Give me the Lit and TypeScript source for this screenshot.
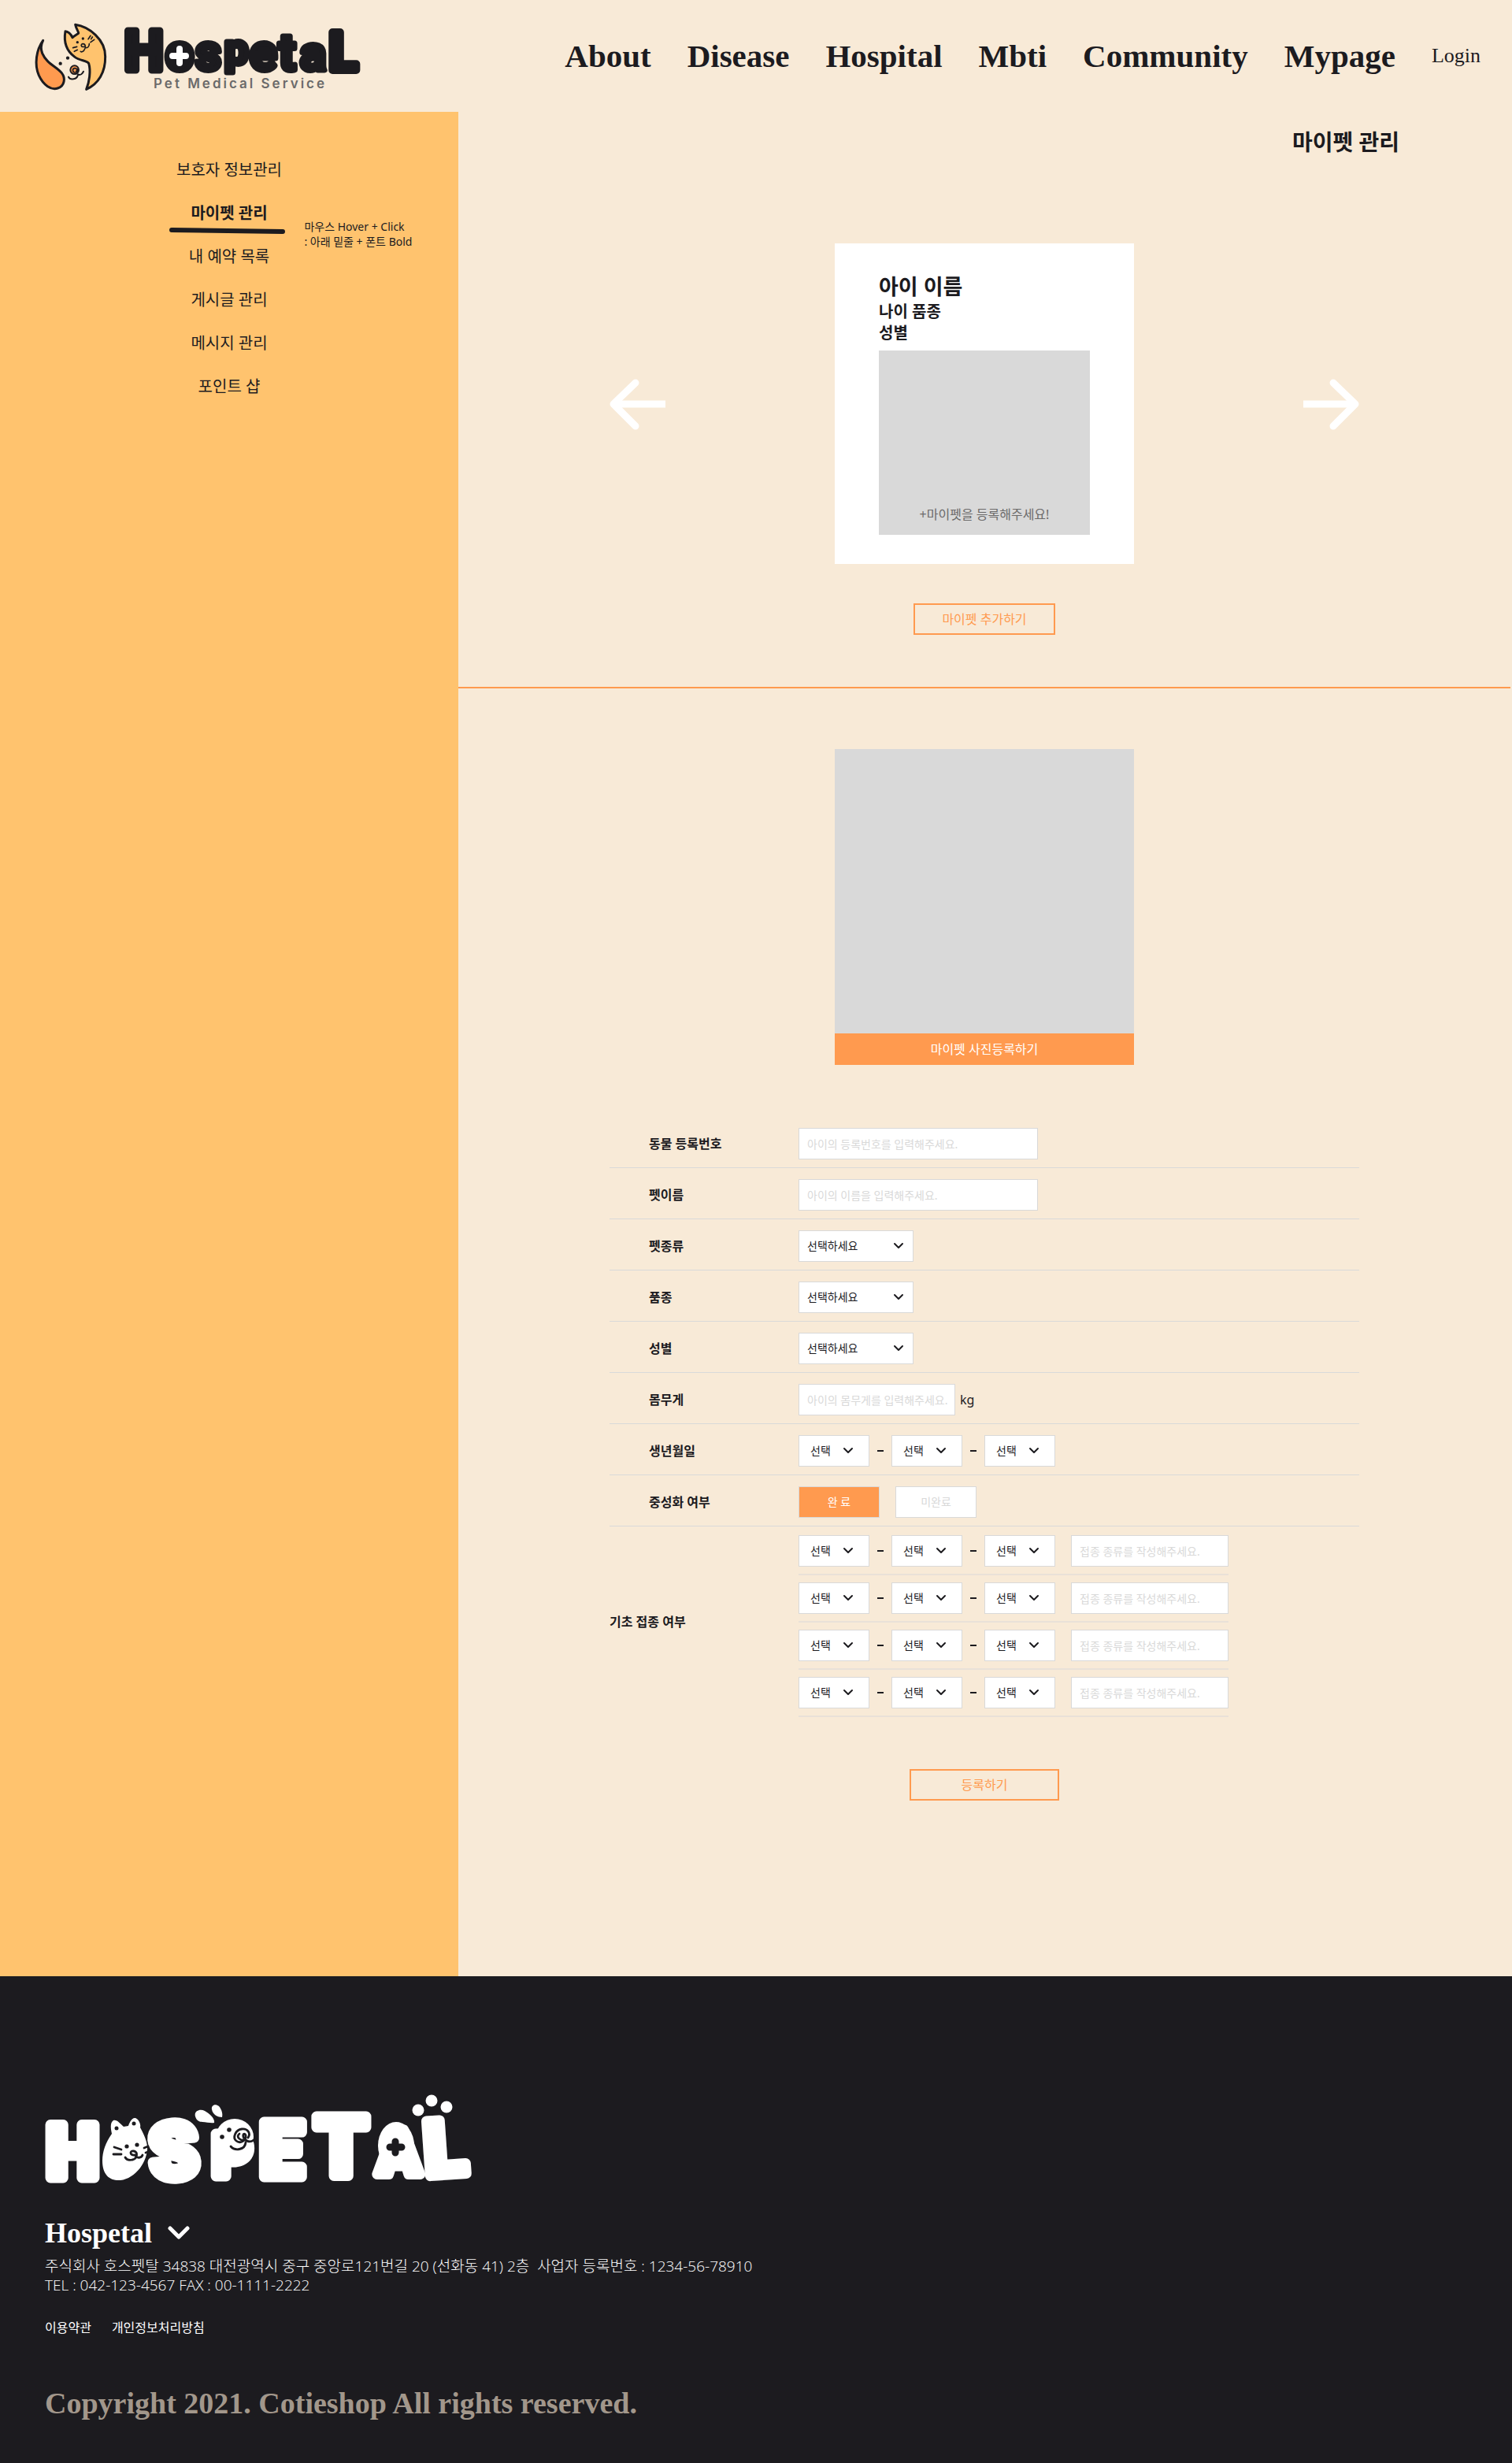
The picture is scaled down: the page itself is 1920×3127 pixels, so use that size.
import { LitElement, html, css, svg, nothing } from "lit";
import { customElement, state } from "lit/decorators.js";

const NAV = ["About", "Disease", "Hospital", "Mbti", "Community", "Mypage"];

const MENU = [
  "보호자 정보관리",
  "마이펫 관리",
  "내 예약 목록",
  "게시글 관리",
  "메시지 관리",
  "포인트 샵",
];

const DATE_PARTS = ["년", "월", "일"];

const chevron = html`
  <svg class="chevron" viewBox="0 0 14 10" aria-hidden="true">
    <path d="M2 2 L7 7 L12 2" fill="none" stroke="#1c1b1f" stroke-width="2" stroke-linecap="round" stroke-linejoin="round" />
  </svg>
`;

const headerLogo = html`
  <svg class="brand-logo" viewBox="40 11 420 120" role="img" aria-label="Hospetal Pet Medical Service">
    <g transform="translate(30 15) scale(0.3333)" stroke="#1c1b1f" stroke-linecap="round" stroke-linejoin="round" fill="none">
      <path fill="#ff9a4f" stroke-width="9" d="M74 109 C48 145 40 200 58 242 C76 281 105 299 130 291 C157 282 160 252 145 233 C125 208 88 198 71 158 C64 140 66 125 74 109Z" />
      <path fill="#ffc36e" stroke-width="9" d="M239 295 C250 268 257 225 248 196 C239 184 215 187 195 172 C165 150 152 115 159 74 C168 74 180 84 186 98 C192 92 200 88 209 82 C210 75 200 66 197 49 C250 57 311 105 311 170 C312 230 285 275 239 295Z" />
      <g fill="#1c1b1f" stroke="none">
        <circle cx="205" cy="116" r="5" />
        <circle cx="226" cy="102" r="5" />
        <circle cx="140" cy="197" r="6.5" />
        <circle cx="168" cy="176" r="6.5" />
      </g>
      <g stroke-width="5">
        <path d="M188 137 L203 133 M193 151 L205 145 M246 104 L255 91 M255 116 L269 106 M257 104 L262 96" />
        <path d="M230 133 C219 136 216 124 225 122 C236 121 238 136 231 145 C227 152 221 154 217 151 M236 136 C243 139 250 133 250 122" />
      </g>
      <circle cx="194" cy="221" r="16" fill="#ff9a4f" stroke-width="6" />
      <path stroke-width="5" d="M197 231 C186 232 184 217 194 215 C203 214 206 222 200 227 M206 218 C208 226 204 232 200 236" />
      <path stroke-width="6" d="M171 248 C178 261 203 259 207 240 M207 238 C216 243 225 236 228 227" />
    </g>
    <text
      x="158 210 248 285 317 354 381 418"
      y="89 89 89 81 89 89 89 89"
      font-family="Roboto, sans-serif"
      font-weight="700"
      font-size="64"
      fill="#1c1b1f"
      stroke="#1c1b1f"
      stroke-linejoin="round"
      stroke-width="7"
    ><tspan font-size="70" stroke-width="9">H</tspan>os<tspan font-size="54">p</tspan>et<tspan font-size="62">a</tspan><tspan font-size="66" stroke-width="10">L</tspan></text>
    <ellipse cx="228" cy="71" rx="14" ry="17" fill="#1c1b1f" />
    <path d="M228 62 V80 M219 71 H236" stroke="#ffffff" stroke-width="8" stroke-linecap="round" />
    <text x="195" y="112" font-family="Inter, sans-serif" font-size="17" font-weight="600" letter-spacing="3" fill="#6b6a6a">Pet Medical Service</text>
  </svg>
`;

const footerLogo = html`
  <svg class="footer-logo" viewBox="47 25 568 145" role="img" aria-label="HOSPETAL">
    <g fill="#ffffff" stroke="#ffffff" stroke-linejoin="round" stroke-width="13" font-family="Roboto, sans-serif" font-weight="900" font-size="98">
      <text x="59" y="145" font-size="94">H</text>
      <text x="140" y="135" font-size="54">O</text>
      <text x="193" y="148" rotate="-5">S</text>
      <text x="270" y="143" font-size="76">P</text>
      <text x="330" y="144">E</text>
      <text x="400" y="142" font-size="106">T</text>
      <text x="479" y="141" font-size="80">A</text>
      <text x="541" y="143" rotate="-4">L</text>
    </g>
    <g fill="#ffffff">
      <path d="M142 89 C134 100 130 112 130 123 C130 142 140 149 153 148 C172 146 188 124 187 105 C186 95 180 85 178 81 C179 78 177 71 172 69 C167 68 164 76 163 79 L157 80 C152 76 149 71 144 72 C139 75 141 84 142 89Z" />
      <path d="M248 67 C246 60 254 57 260 60 C267 64 273 70 272 75 C268 76 262 74 257 74 C252 74 249 71 248 67Z" />
      <path d="M269 58 C268 53 273 50 278 54 C282 59 283 64 282 68 C277 68 270 65 269 58Z" />
      <ellipse cx="298" cy="93" rx="24" ry="23" />
      <ellipse cx="503" cy="104" rx="23" ry="30" />
      <ellipse cx="531" cy="59" rx="7.5" ry="7.5" />
      <ellipse cx="548" cy="47" rx="7.5" ry="7.5" />
      <ellipse cx="567" cy="55" rx="7.5" ry="7.5" />
    </g>
    <g fill="#1c1b1f">
      <ellipse cx="148" cy="82" rx="2.5" ry="2.5" />
      <ellipse cx="170" cy="76" rx="2.5" ry="2.5" />
      <circle cx="161" cy="105" r="2.6" />
      <circle cx="174" cy="103" r="2.6" />
      <circle cx="282" cy="93" r="2.8" />
      <circle cx="291" cy="84" r="2.8" />
    </g>
    <g fill="none" stroke="#1c1b1f" stroke-width="2.8" stroke-linecap="round" stroke-linejoin="round">
      <path d="M145 106 L154 109 M144 115 L154 115 M183 107 L188 105 M185 113 L188 112" />
      <path d="M171 116 C165 117 164 110 170 111 C176 112 174 121 168 122 C163 123 160 121 159 119 M172 117 C175 121 180 119 181 116" />
      <path d="M311 97 C305 98 299 93 304 89 M315 94 C319 88 314 82 307 83 C299 84 295 94 300 98 C305 102 313 98 312 91 C311 88 308 89 309 93 C311 98 317 101 322 97" />
      <path d="M293 105 C298 111 311 110 312 100" />
    </g>
    <path d="M502 99 V113 M495 106 H510" stroke="#1c1b1f" stroke-width="9" stroke-linecap="round" />
  </svg>
`;

@customElement("app-root")
export class AppRoot extends LitElement {
  @state() private neutered = true;

  static styles = css`
    :host {
      display: block;
      background: #f8ead7;
      color: #1c1b1f;
      font-family: "Noto Sans", "Noto Sans CJK KR", sans-serif;
      font-size: 16px;
      line-height: 24px;
    }
    * {
      box-sizing: border-box;
    }
    a {
      color: inherit;
      text-decoration: none;
    }
    button,
    input,
    select {
      font: inherit;
      color: inherit;
      margin: 0;
      border-radius: 0;
    }
    button {
      cursor: pointer;
    }
    h1,
    h2,
    p,
    ul {
      margin: 0;
      padding: 0;
      list-style: none;
    }

    .header {
      display: flex;
      justify-content: space-between;
      align-items: center;
      min-height: 142px;
      padding: 0 40px;
    }
    .brand-logo {
      display: block;
      width: 420px;
      height: 120px;
      overflow: visible;
    }
    .nav {
      display: flex;
      align-items: center;
      gap: 46px;
      font-family: "Liberation Serif", serif;
      font-size: 41px;
      font-weight: 700;
      line-height: 48px;
    }
    .nav .login {
      font-size: 26px;
      font-weight: 400;
    }

    .body {
      display: grid;
      grid-template-columns: 582fr 1338fr;
    }
    .sidebar {
      background: #ffc36e;
      padding-top: 59px;
    }
    .menu {
      display: flex;
      flex-direction: column;
      align-items: center;
      gap: 25px;
      font-size: 20px;
      line-height: 30px;
    }
    .menu li {
      position: relative;
    }
    .menu .current {
      font-weight: 700;
    }
    .underline {
      position: absolute;
      left: 50%;
      top: 32px;
      width: 150px;
      height: 10px;
      margin-left: -77px;
    }
    .hint {
      position: absolute;
      left: 144px;
      top: 22px;
      font-size: 14px;
      font-weight: 400;
      line-height: 19px;
      white-space: nowrap;
    }

    .main {
      padding: 18px 2px 223px 0;
    }
    .title {
      padding-right: 141px;
      text-align: right;
      font-size: 28px;
      line-height: 40px;
    }
    .pets {
      display: flex;
      flex-direction: column;
      align-items: center;
      gap: 50px;
      padding: 109px 0 66px;
      border-bottom: 2px solid #ff9a4f;
    }
    .carousel {
      display: flex;
      justify-content: space-between;
      align-items: center;
      width: 100%;
      max-width: 952px;
    }
    .arrow {
      display: block;
      padding: 0;
      border: 0;
      background: none;
    }
    .arrow svg {
      display: block;
      width: 72px;
      height: 66px;
    }
    .card {
      width: 380px;
      padding: 37px 56px;
      background: #ffffff;
      font-size: 20px;
      font-weight: 700;
      line-height: 27px;
    }
    .card h2 {
      font-size: 27px;
      line-height: 36px;
    }
    .card .thumb {
      display: flex;
      align-items: flex-end;
      justify-content: center;
      width: 100%;
      height: 234px;
      margin-top: 9px;
      padding: 0 0 12px;
      border: 0;
      background: #d9d9d9;
      color: #6b6a6a;
      font-size: 16px;
      font-weight: 400;
    }
    .outline {
      width: 180px;
      height: 40px;
      padding: 0;
      border: 2px solid #ff9a4f;
      background: none;
      color: #ff9a4f;
    }
    .outline.wide {
      width: 190px;
    }

    .register {
      display: flex;
      flex-direction: column;
      align-items: center;
      gap: 66px;
      padding-top: 77px;
    }
    .photo {
      width: 380px;
    }
    .photo .frame {
      height: 361px;
      background: #d9d9d9;
    }
    .photo button {
      display: block;
      width: 100%;
      height: 40px;
      padding: 0;
      border: 0;
      background: #ff9a4f;
      color: #ffffff;
    }
    .fields {
      width: 100%;
      max-width: 952px;
    }
    .row {
      display: grid;
      grid-template-columns: 240px 1fr;
      align-items: center;
      padding: 14px 0 10px;
      border-bottom: 1px solid #d9d9d9;
      font-size: 14px;
    }
    .row .name {
      padding-left: 50px;
      font-size: 16px;
      font-weight: 700;
    }
    .row.vaccines {
      padding: 0;
      border-bottom: 0;
    }
    .row.vaccines .name {
      padding-left: 0;
    }
    .control {
      display: flex;
      align-items: center;
    }
    .text {
      width: 304px;
      height: 40px;
      padding: 0 10px;
      border: 1px solid #d9d9d9;
      background: #ffffff;
    }
    .text::placeholder {
      color: #d9d9d9;
      opacity: 1;
    }
    .text.weight {
      width: 199px;
      padding-right: 0;
    }
    .unit {
      margin-left: 6px;
      font-size: 16px;
    }
    .picker {
      display: grid;
      align-items: center;
      width: 146px;
      height: 40px;
    }
    .picker select {
      grid-area: 1 / 1;
      width: 100%;
      height: 40px;
      padding: 0 10px;
      border: 1px solid #d9d9d9;
      background: #ffffff;
      appearance: none;
    }
    .chevron {
      grid-area: 1 / 1;
      justify-self: end;
      width: 14px;
      height: 10px;
      margin-right: 12px;
      pointer-events: none;
    }
    .picker.small {
      width: 90px;
    }
    .picker.small select {
      padding: 0 14px;
    }
    .picker.small .chevron {
      margin-right: 20px;
    }
    .dash {
      width: 8px;
      height: 2px;
      margin: 0 10px;
      background: #1c1b1f;
    }
    .choices {
      display: flex;
      gap: 20px;
    }
    .choice {
      width: 103px;
      height: 40px;
      padding: 0;
      border: 1px solid #d9d9d9;
      background: #ffffff;
      color: #d9d9d9;
    }
    .choice[aria-pressed="true"] {
      background: #ff9a4f;
      color: #ffffff;
    }
    .doses {
      display: flex;
      flex-direction: column;
      gap: 9px;
      justify-self: start;
      padding-top: 11px;
    }
    .dose {
      display: flex;
      align-items: center;
      gap: 20px;
      padding-bottom: 9px;
      border-bottom: 2px solid #e9e1d8;
    }
    .text.kind {
      width: 200px;
    }

    .footer {
      padding: 136px 57px 52px;
      background: #1c1b1f;
      color: #ffffff;
    }
    .footer-logo {
      display: block;
      width: 568px;
      height: 145px;
      margin-left: -10px;
      overflow: visible;
    }
    .company {
      display: flex;
      align-items: center;
      gap: 20px;
      margin-top: 25px;
      padding: 0;
      border: 0;
      background: none;
      font-family: "Liberation Serif", serif;
      font-size: 36px;
      font-weight: 700;
      line-height: 40px;
    }
    .company svg {
      width: 28px;
      height: 20px;
    }
    .address {
      margin-top: 10px;
      font-family: "Open Sans", "Noto Sans CJK KR", sans-serif;
      font-size: 19px;
      font-weight: 300;
      white-space: pre-wrap;
    }
    .policies {
      display: flex;
      gap: 26px;
      margin-top: 30px;
    }
    .copyright {
      margin-top: 60px;
      color: #a2978b;
      font-family: "Liberation Serif", serif;
      font-size: 38px;
      font-weight: 700;
      line-height: 48px;
    }
  `;

  private datePicker(label: string, firstId?: string) {
    return html`
      <div class="control">
        ${DATE_PARTS.map(
          (part, i) => html`
            ${i > 0 ? html`<span class="dash"></span>` : nothing}
            <span class="picker small">
              <select id=${i === 0 && firstId ? firstId : nothing} aria-label="${label} ${part}">
                <option>선택</option>
              </select>
              ${chevron}
            </span>
          `,
        )}
      </div>
    `;
  }

  private selectRow(id: string, name: string) {
    return html`
      <div class="row">
        <label class="name" for=${id}>${name}</label>
        <div class="control">
          <span class="picker">
            <select id=${id}>
              <option>선택하세요</option>
            </select>
            ${chevron}
          </span>
        </div>
      </div>
    `;
  }

  private textRow(id: string, name: string, hint: string) {
    return html`
      <div class="row">
        <label class="name" for=${id}>${name}</label>
        <div class="control"><input class="text" id=${id} type="text" placeholder=${hint} /></div>
      </div>
    `;
  }

  private arrow(direction: "prev" | "next") {
    const head =
      direction === "prev"
        ? "M33 6 L5 33 L33 61"
        : "M39 6 L67 33 L39 61";
    const shaft = direction === "prev" ? "M6 33 H71" : "M66 33 H1";
    return html`
      <button class="arrow" type="button" aria-label=${direction === "prev" ? "이전" : "다음"}>
        <svg viewBox="0 0 72 66" aria-hidden="true">
          ${svg`<path d=${head} fill="none" stroke="#ffffff" stroke-width="9" stroke-linecap="round" stroke-linejoin="round" />
          <path d=${shaft} stroke="#ffffff" stroke-width="9" />`}
        </svg>
      </button>
    `;
  }

  render() {
    return html`
      <header class="header">
        <a href="#home">${headerLogo}</a>
        <nav class="nav">
          ${NAV.map((item) => html`<a href="#${item.toLowerCase()}">${item}</a>`)}
          <a class="login" href="#login">Login</a>
        </nav>
      </header>

      <div class="body">
        <aside class="sidebar">
          <ul class="menu">
            ${MENU.map(
              (item, i) => html`
                <li class=${i === 1 ? "current" : ""}>
                  <a href="#menu-${i}">${item}</a>
                  ${i === 1
                    ? html`
                        <svg class="underline" viewBox="0 0 150 10" aria-hidden="true">
                          <path d="M4 4 L145 6" stroke="#1c1b1f" stroke-width="6" stroke-linecap="round" />
                        </svg>
                        <p class="hint">마우스 Hover + Click<br />: 아래 밑줄 + 폰트 Bold</p>
                      `
                    : nothing}
                </li>
              `,
            )}
          </ul>
        </aside>

        <main class="main">
          <h1 class="title">마이펫 관리</h1>

          <section class="pets">
            <div class="carousel">
              ${this.arrow("prev")}
              <article class="card">
                <h2>아이 이름</h2>
                <p>나이 품종</p>
                <p>성별</p>
                <button class="thumb" type="button">+마이펫을 등록해주세요!</button>
              </article>
              ${this.arrow("next")}
            </div>
            <button class="outline" type="button">마이펫 추가하기</button>
          </section>

          <form class="register" @submit=${(e: Event) => e.preventDefault()}>
            <div class="photo">
              <div class="frame"></div>
              <button type="button">마이펫 사진등록하기</button>
            </div>

            <div class="fields">
              ${this.textRow("reg-no", "동물 등록번호", "아이의 등록번호를 입력해주세요.")}
              ${this.textRow("pet-name", "펫이름", "아이의 이름을 입력해주세요.")}
              ${this.selectRow("kind", "펫종류")}
              ${this.selectRow("breed", "품종")}
              ${this.selectRow("sex", "성별")}
              <div class="row">
                <label class="name" for="weight">몸무게</label>
                <div class="control">
                  <input class="text weight" id="weight" type="text" placeholder="아이의 몸무게를 입력해주세요." />
                  <span class="unit">kg</span>
                </div>
              </div>
              <div class="row">
                <label class="name" for="birth">생년월일</label>
                ${this.datePicker("생년월일", "birth")}
              </div>
              <div class="row">
                <span class="name" id="neutered">중성화 여부</span>
                <div class="choices" role="group" aria-labelledby="neutered">
                  <button
                    class="choice"
                    type="button"
                    aria-pressed=${this.neutered ? "true" : "false"}
                    @click=${() => (this.neutered = true)}
                  >완 료</button>
                  <button
                    class="choice"
                    type="button"
                    aria-pressed=${this.neutered ? "false" : "true"}
                    @click=${() => (this.neutered = false)}
                  >미완료</button>
                </div>
              </div>
              <div class="row vaccines">
                <span class="name" id="vaccines">기초 접종 여부</span>
                <div class="doses" role="group" aria-labelledby="vaccines">
                  ${[1, 2, 3, 4].map(
                    (n) => html`
                      <div class="dose">
                        ${this.datePicker(`${n}차 접종`)}
                        <input class="text kind" type="text" aria-label="${n}차 접종 종류" placeholder="접종 종류를 작성해주세요." />
                      </div>
                    `,
                  )}
                </div>
              </div>
            </div>

            <button class="outline wide" type="submit">등록하기</button>
          </form>
        </main>
      </div>

      <footer class="footer">
        ${footerLogo}
        <button class="company" type="button">
          Hospetal
          <svg viewBox="0 0 28 20" aria-hidden="true">
            <path d="M3 4 L14 15 L25 4" fill="none" stroke="#ffffff" stroke-width="5" stroke-linecap="round" stroke-linejoin="round" />
          </svg>
        </button>
        <p class="address">주식회사 호스펫탈 34838 대전광역시 중구 중앙로121번길 20 (선화동 41) 2층  사업자 등록번호 : 1234-56-78910<br />TEL : 042-123-4567 FAX : 00-1111-2222</p>
        <div class="policies">
          <a href="#terms">이용약관</a>
          <a href="#privacy">개인정보처리방침</a>
        </div>
        <p class="copyright">Copyright 2021. Cotieshop All rights reserved.</p>
      </footer>
    `;
  }
}
